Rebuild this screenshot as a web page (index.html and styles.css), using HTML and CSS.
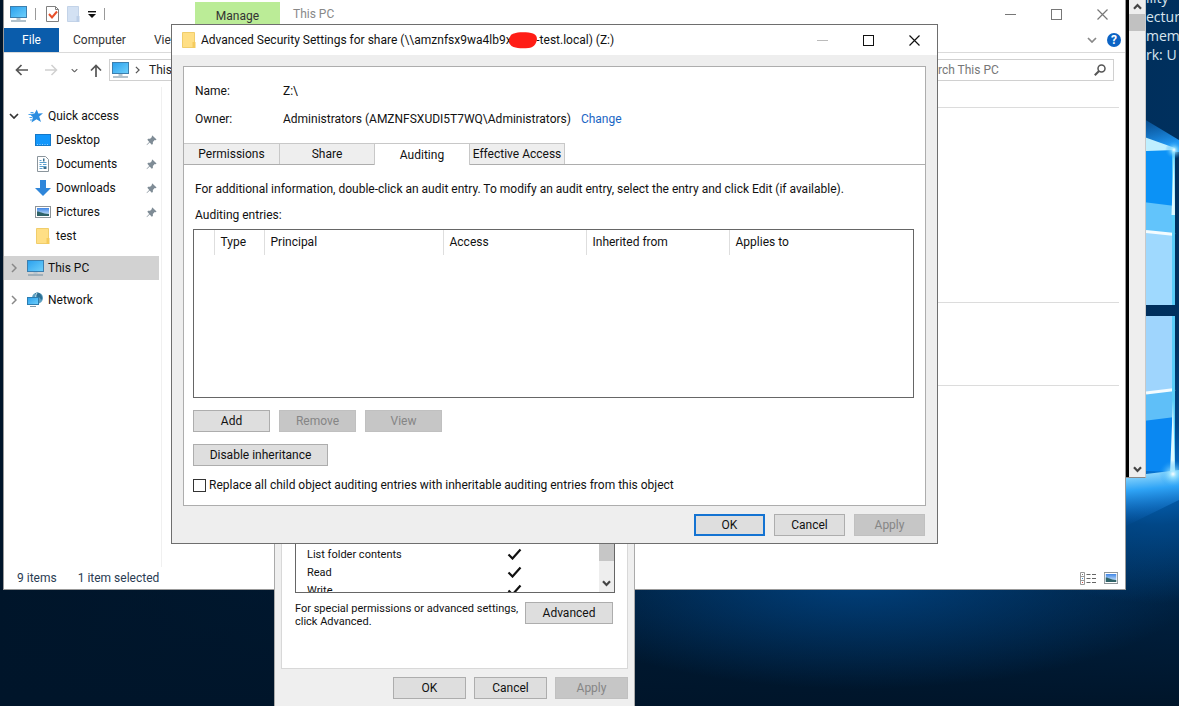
FILE: index.html
```html
<!DOCTYPE html>
<html lang="en">
<head>
    <meta charset="UTF-8">
    <meta name="viewport" content="width=device-width, initial-scale=1.0">
    <title>Advanced Security Settings</title>
    <link rel="stylesheet" href="styles.css">
</head>
<body>

<svg class="sprite" width="0" height="0" aria-hidden="true">
    <defs>
        <linearGradient id="screenFill" x1="0" y1="0" x2="1" y2="1">
            <stop offset="0" stop-color="#2aa0ee"/>
            <stop offset="1" stop-color="#6fd0fb"/>
        </linearGradient>
        <linearGradient id="skyFill" x1="0" y1="0" x2="0" y2="1">
            <stop offset="0" stop-color="#3f86e6"/>
            <stop offset="1" stop-color="#e4f3fb"/>
        </linearGradient>
    </defs>
    <symbol id="icon-pc" viewBox="0 0 17 16">
        <rect x="0.5" y="0.5" width="16" height="11" fill="url(#screenFill)" stroke="#3d7fae"/>
        <path d="M6.5 12h4v2h-4z" fill="#b9c6cf"/>
        <path d="M1 15h15" stroke="#7f98a8" stroke-width="1.2"/>
    </symbol>
    <symbol id="icon-folder" viewBox="0 0 14 16">
        <path d="M0.5 0.5h12v15h-12z" fill="#ffdf85" stroke="#f0cd6b"/>
        <path d="M10.5 10h3v6h-3z" fill="#f5cb5c"/>
    </symbol>
    <symbol id="icon-picture" viewBox="0 0 16 12">
        <rect x="0.5" y="0.5" width="15" height="11" fill="#fff" stroke="#8d9499"/>
        <rect x="2" y="2" width="12" height="8" fill="url(#skyFill)"/>
        <path d="M2 5.5c3 0 5 2 12 2.500V10H2z" fill="#2f6368"/>
    </symbol>
    <symbol id="icon-pin" viewBox="0 0 12 12">
        <path d="M7 0.500l4.500 4.500-1 0.700-1-0.200-2 2 0 2.200-1.200 0.800L4 8.300 0.800 11.300l0-0.900L3.500 7.500 1.500 5.300l0.800-1.200 2.200 0 2-2-0.200-1z" fill="#7f8c96"/>
    </symbol>
    <symbol id="icon-check" viewBox="0 0 15 12">
        <path d="M1.500 6.500L5.500 10.500 13.500 1.500" fill="none" stroke="#111" stroke-width="2.200"/>
    </symbol>
    <symbol id="icon-right" viewBox="0 0 6 10">
        <path d="M1 1l4 4-4 4" fill="none" stroke="currentColor" stroke-width="1.500"/>
    </symbol>
    <symbol id="icon-down" viewBox="0 0 10 6">
        <path d="M1 1l4 4 4-4" fill="none" stroke="currentColor" stroke-width="1.700"/>
    </symbol>
    <symbol id="icon-scroll" viewBox="0 0 9 7">
        <path d="M1 1.200l3.500 3.800 3.500-3.800" fill="none" stroke="currentColor" stroke-width="2.200"/>
    </symbol>
    <symbol id="icon-close" viewBox="0 0 11 11">
        <path d="M0.500 0.500l10 10M10.500 0.500l-10 10" fill="none" stroke="currentColor" stroke-width="1.200"/>
    </symbol>
    <symbol id="icon-max" viewBox="0 0 11 11">
        <rect x="0.500" y="0.500" width="10" height="10" fill="none" stroke="currentColor"/>
    </symbol>
    <symbol id="icon-min" viewBox="0 0 11 11">
        <path d="M0 5.500h11" stroke="currentColor"/>
    </symbol>
</svg>

<div class="desktop">
    <svg class="wallpaper-logo" width="80" height="560" viewBox="0 0 80 560" aria-hidden="true">
        <defs>
            <radialGradient id="flare">
                <stop offset="0" stop-color="#fff"/>
                <stop offset="0.250" stop-color="#9fe6ff" stop-opacity="0.800"/>
                <stop offset="1" stop-color="#1c9cf5" stop-opacity="0"/>
            </radialGradient>
            <linearGradient id="beam" x1="0.300" y1="0" x2="0.400" y2="1">
                <stop offset="0" stop-color="#a9e6ff"/>
                <stop offset="0.350" stop-color="#2fa4f6"/>
                <stop offset="1" stop-color="#0a5cb5" stop-opacity="0"/>
            </linearGradient>
            <linearGradient id="haze" x1="0" y1="0" x2="0.300" y2="1">
                <stop offset="0" stop-color="#0a5cb5" stop-opacity="0"/>
                <stop offset="1" stop-color="#1f96f2"/>
            </linearGradient>
        </defs>
        <path d="M20 104L80 140V152H20z" fill="url(#haze)"/>
        <path d="M20 128L76 148V152H20z" fill="#bfefff"/>
        <path d="M20 152L76 150V305H20z" fill="#0b92f6"/>
        <path d="M20 199L76 206V305H20z" fill="#62c4fb"/>
        <path d="M20 228L76 234V305H20z" fill="#9fd9fe"/>
        <path d="M47 231.500L76 234.500" stroke="#f4fcff" stroke-width="3"/>
        <path d="M20 316H76V472L20 470z" fill="#0a88f2"/>
        <path d="M20 316H76V417L20 424z" fill="#5fbff8"/>
        <path d="M20 316H76V390L20 396z" fill="#9fd5fd"/>
        <path d="M47 393L76 389.500" stroke="#f4fcff" stroke-width="3"/>
        <path d="M74.500 150V305M74.500 316V474" stroke="#58cdf8" stroke-width="3"/>
        <path d="M75 150L72.500 215H76zM71 474L74 400L76 474z" fill="#dffaff"/>
        <path d="M20 478L47 474 80 470V500L27 526z" fill="url(#beam)"/>
        <circle cx="74" cy="474" r="14" fill="url(#flare)"/>
        <circle cx="75" cy="150" r="9" fill="url(#flare)"/>
    </svg>
    <ul class="host-info">
        <li>ility</li>
        <li>ecture</li>
        <li>memo</li>
        <li>rk: U</li>
    </ul>

    <!-- console window behind explorer -->
    <div class="console">
        <div class="scrollbar">
            <svg class="scroll-up" width="9" height="7"><use href="#icon-scroll"/></svg>
            <div class="scroll-thumb"></div>
            <svg class="scroll-down" width="9" height="7"><use href="#icon-scroll"/></svg>
        </div>
    </div>

    <div class="explorer">
        <div class="explorer-title">
            <div class="quick-bar">
                <svg width="17" height="16"><use href="#icon-pc"/></svg>
                <span class="divider"></span>
                <svg class="quick-check" width="13" height="16" viewBox="0 0 13 16">
                    <path d="M0.500 0.500h9l3 3v12h-12z" fill="#fff" stroke="#808080"/>
                    <path d="M9.500 0.500v3h3" fill="none" stroke="#808080"/>
                    <path d="M3 8l3 3.500 5-6" fill="none" stroke="#e8502a" stroke-width="2"/>
                </svg>
                <svg width="13" height="16" viewBox="0 0 13 16">
                    <path d="M0.500 0.500h11v15h-11z" fill="#d3e1f3" stroke="#c3d3e8"/>
                    <path d="M9.500 10h3v6h-3z" fill="#bccfe8"/>
                </svg>
                <svg width="8" height="7" viewBox="0 0 8 7">
                    <path d="M0 0.700h8" stroke="#111" stroke-width="1.400"/>
                    <path d="M0 3h8L4 7z" fill="#111"/>
                </svg>
                <span class="divider"></span>
            </div>
            <div class="manage-tab">Manage</div>
            <span class="explorer-name">This PC</span>
            <div class="window-buttons">
                <button type="button" aria-label="Minimize"><svg width="11" height="11"><use href="#icon-min"/></svg></button>
                <button type="button" aria-label="Maximize"><svg width="11" height="11"><use href="#icon-max"/></svg></button>
                <button type="button" aria-label="Close"><svg width="11" height="11"><use href="#icon-close"/></svg></button>
            </div>
        </div>

        <div class="ribbon">
            <button type="button" class="ribbon-file">File</button>
            <button type="button" class="ribbon-tab">Computer</button>
            <button type="button" class="ribbon-tab">View</button>
            <div class="ribbon-help">
                <svg width="10" height="6"><use href="#icon-down"/></svg>
                <button type="button" class="help-btn">?</button>
            </div>
        </div>

        <div class="address-row">
            <svg class="arrow" width="13" height="12" viewBox="0 0 13 12"><path d="M13 6H1.500M6.500 1L1.500 6l5 5" fill="none" stroke="#555" stroke-width="1.700"/></svg>
            <svg class="arrow" width="13" height="12" viewBox="0 0 13 12"><path d="M0 6h11.500M6.500 1l5 5-5 5" fill="none" stroke="#d0d0d0" stroke-width="1.500"/></svg>
            <svg class="recent" width="7" height="5" viewBox="0 0 10 6"><use href="#icon-down"/></svg>
            <svg class="arrow" width="12" height="13" viewBox="0 0 12 13"><path d="M6 13V1.500M1 6.500l5-5 5 5" fill="none" stroke="#555" stroke-width="1.700"/></svg>
            <div class="address">
                <svg width="17" height="16"><use href="#icon-pc"/></svg>
                <svg class="crumb" width="5" height="8" viewBox="0 0 6 10"><use href="#icon-right"/></svg>
                <span>This PC</span>
            </div>
            <div class="search">
                <input type="text" placeholder="Search This PC" aria-label="Search This PC">
                <svg width="12" height="12" viewBox="0 0 12 12">
                    <circle cx="7.500" cy="4.500" r="3.500" fill="none" stroke="#555" stroke-width="1.500"/>
                    <path d="M5 7L0.800 11.200" stroke="#555" stroke-width="2"/>
                </svg>
            </div>
        </div>

        <div class="explorer-body">
            <nav class="nav-pane">
                <a href="#" class="nav-item nav-root">
                    <svg class="chevron open" width="10" height="6"><use href="#icon-down"/></svg>
                    <svg class="nav-icon" width="17" height="14" viewBox="0 0 17 14">
                        <path d="M9.800 0.500l1.500 4 4.700-0.200-3.800 3.200 1.800 5.500-4.500-2.800-5 3.300 1.500-5.300L2.500 5l5-0.400z" fill="#2b8de0"/>
                        <path d="M3.500 3.500h3M1.500 5.500h4M2.500 8.500h3M3 11h3" stroke="#4aa3ea"/>
                    </svg>
                    <span>Quick access</span>
                </a>
                <a href="#" class="nav-item nav-child">
                    <svg class="nav-icon" width="16" height="12" viewBox="0 0 16 12"><rect x="0.500" y="0.500" width="15" height="11" fill="#1397fb" stroke="#1478c8"/><path d="M2 10.500h12" stroke="#8fcdff" stroke-dasharray="1 1.500"/></svg>
                    <span>Desktop</span>
                    <svg class="pin" width="11" height="11"><use href="#icon-pin"/></svg>
                </a>
                <a href="#" class="nav-item nav-child">
                    <svg class="nav-icon" width="16" height="16" viewBox="0 0 16 16">
                        <path d="M2.500 0.500h8l3 3v12h-11z" fill="#fff" stroke="#8b959c"/>
                        <path d="M4.500 4.500h2M4.500 6.500h7M4.500 8.500h2M8 8.500h3.500M4.500 10.500h7M4.500 12.500h3" stroke="#5ba0cf"/>
                        <path d="M8 2.500h1.500v3H8zM8.500 11h3v2h-3z" fill="#3c6e8c"/>
                    </svg>
                    <span>Documents</span>
                    <svg class="pin" width="11" height="11"><use href="#icon-pin"/></svg>
                </a>
                <a href="#" class="nav-item nav-child">
                    <svg class="nav-icon" width="16" height="16" viewBox="0 0 16 16"><path d="M5 0h6v8h5l-8 8-8-8h5z" fill="#2f86da"/></svg>
                    <span>Downloads</span>
                    <svg class="pin" width="11" height="11"><use href="#icon-pin"/></svg>
                </a>
                <a href="#" class="nav-item nav-child">
                    <svg class="nav-icon" width="16" height="12"><use href="#icon-picture"/></svg>
                    <span>Pictures</span>
                    <svg class="pin" width="11" height="11"><use href="#icon-pin"/></svg>
                </a>
                <a href="#" class="nav-item nav-child">
                    <svg class="nav-icon" width="16" height="16" viewBox="0 0 14 16"><use href="#icon-folder"/></svg>
                    <span>test</span>
                </a>
                <a href="#" class="nav-item nav-root nav-group selected">
                    <svg class="chevron" width="10" height="10" viewBox="0 0 6 10"><use href="#icon-right"/></svg>
                    <svg class="nav-icon" width="17" height="16"><use href="#icon-pc"/></svg>
                    <span>This PC</span>
                </a>
                <a href="#" class="nav-item nav-root nav-group">
                    <svg class="chevron" width="10" height="10" viewBox="0 0 6 10"><use href="#icon-right"/></svg>
                    <svg class="nav-icon" width="17" height="16" viewBox="0 0 17 16">
                        <circle cx="10.500" cy="6" r="5.500" fill="#5c9fc0"/>
                        <path d="M8 1.500c2 1 0 3 3 3.500s2 3 4 2.500C16 4 13 0.500 10 0.500z" fill="#2d6f93"/>
                        <path d="M10 1c-2 3-2 7 0 10" fill="none" stroke="#cfe9f3"/>
                        <rect x="0.500" y="5.500" width="11" height="7" fill="url(#screenFill)" stroke="#2d7db0"/>
                        <path d="M3 14.500h6" stroke="#7f98a8"/>
                    </svg>
                    <span>Network</span>
                </a>
            </nav>
            <div class="file-groups">
                <section class="file-group"></section>
                <section class="file-group"></section>
                <section class="file-group"></section>
            </div>
        </div>

        <div class="status-bar">
            <span>9 items</span>
            <span>1 item selected</span>
            <div class="view-modes">
                <svg width="17" height="13" viewBox="0 0 17 13">
                    <path d="M0.500 0.500h4v12h-4zM0.500 4.500h4M0.500 8.500h4" fill="#fff" stroke="#999"/>
                    <path d="M6.500 2.500h4M12 2.500h4M6.500 6.500h4M12 6.500h4M6.500 10.500h4M12 10.500h4" stroke="#666"/>
                    <path d="M2 2h1v1H2z" fill="#777"/><path d="M2 6h1v1H2z" fill="#3b8fd0"/><path d="M2 10h1v1H2z" fill="#d0443b"/>
                </svg>
                <svg width="14" height="12" viewBox="0 0 16 12" preserveAspectRatio="none"><use href="#icon-picture"/></svg>
            </div>
        </div>
    </div>

    <div class="properties">
        <div class="properties-page">
            <div class="permission-list">
                <table class="permission-table">
                    <tr><td>List folder contents</td><td class="allow"><svg width="15" height="12"><use href="#icon-check"/></svg></td></tr>
                    <tr><td>Read</td><td class="allow"><svg width="15" height="12"><use href="#icon-check"/></svg></td></tr>
                    <tr><td>Write</td><td class="allow"><svg width="15" height="12"><use href="#icon-check"/></svg></td></tr>
                </table>
                <div class="permission-scroll">
                    <div class="permission-thumb"></div>
                    <svg width="9" height="7"><use href="#icon-scroll"/></svg>
                </div>
            </div>
            <div class="special">
                <p>For special permissions or advanced settings, click Advanced.</p>
                <button type="button" class="btn">Advanced</button>
            </div>
        </div>
        <div class="properties-footer">
            <button type="button" class="btn">OK</button>
            <button type="button" class="btn">Cancel</button>
            <button type="button" class="btn" disabled>Apply</button>
        </div>
    </div>

    <div class="dialog">
        <div class="dialog-title">
            <svg width="14" height="16"><use href="#icon-folder"/></svg>
            <h1>Advanced Security Settings for share (\\amznfsx9wa4lb9x<span class="redacted">y<svg width="28" height="17" viewBox="0 0 28 17"><path d="M5 1.500C9-0.500 20 0 24 1.500s4.500 5 3.500 8-3 6-8 6.500-11 0.500-15-1S-0.500 10 0.500 6.500 2 2.500 5 1.500z" fill="#ff1d16"/></svg></span>-test.local) (Z:)</h1>
            <div class="window-buttons">
                <button type="button" aria-label="Minimize" disabled><svg width="11" height="11"><use href="#icon-min"/></svg></button>
                <button type="button" aria-label="Maximize"><svg width="11" height="11"><use href="#icon-max"/></svg></button>
                <button type="button" aria-label="Close"><svg width="11" height="11"><use href="#icon-close"/></svg></button>
            </div>
        </div>

        <div class="dialog-body">
            <div class="panel">
                <dl class="details">
                    <dt>Name:</dt>
                    <dd>Z:\</dd>
                    <dt>Owner:</dt>
                    <dd>Administrators (AMZNFSXUDI5T7WQ\Administrators) <a href="#">Change</a></dd>
                </dl>

                <div class="tabs" role="tablist">
                    <button type="button" class="tab" role="tab">Permissions</button>
                    <button type="button" class="tab" role="tab">Share</button>
                    <button type="button" class="tab active" role="tab" aria-selected="true">Auditing</button>
                    <button type="button" class="tab" role="tab">Effective Access</button>
                </div>

                <div class="tab-page">
                    <p>For additional information, double-click an audit entry. To modify an audit entry, select the entry and click Edit (if available).</p>
                    <p>Auditing entries:</p>
                    <div class="entries">
                        <table class="entries-table">
                            <thead>
                                <tr>
                                    <th class="col-icon"></th>
                                    <th class="col-type">Type</th>
                                    <th class="col-principal">Principal</th>
                                    <th class="col-access">Access</th>
                                    <th class="col-access">Inherited from</th>
                                    <th>Applies to</th>
                                </tr>
                            </thead>
                        </table>
                    </div>
                    <div class="actions">
                        <button type="button" class="btn">Add</button>
                        <button type="button" class="btn" disabled>Remove</button>
                        <button type="button" class="btn" disabled>View</button>
                    </div>
                    <button type="button" class="btn btn-wide">Disable inheritance</button>
                    <div class="replace">
                        <input type="checkbox" id="replaceChild">
                        <label for="replaceChild">Replace all child object auditing entries with inheritable auditing entries from this object</label>
                    </div>
                </div>
            </div>
            <div class="dialog-footer">
                <button type="button" class="btn btn-default">OK</button>
                <button type="button" class="btn">Cancel</button>
                <button type="button" class="btn" disabled>Apply</button>
            </div>
        </div>
    </div>
</div>

</body>
</html>
```
FILE: styles.css
```css
* {
    box-sizing: border-box;
}
body {
    margin: 0;
    font-family: Roboto, "Open Sans", sans-serif;
    font-size: 12px;
    line-height: 16px;
    color: #111;
}
button, input {
    font: inherit;
    color: inherit;
    margin: 0;
}
svg {
    display: block;
    flex: none;
}
p, h1, dl, dd, ul {
    margin: 0;
}
a {
    color: inherit;
    text-decoration: none;
}
.sprite {
    position: absolute;
}
.desktop {
    position: relative;
    min-height: 100vh;
    overflow: hidden;
    background:
        radial-gradient(ellipse 200px 130px at 98% 67%, #0672d0 0%, #014787 40%, rgba(0, 50, 100, 0) 100%),
        radial-gradient(ellipse 340px 110px at 73% 82%, #01407c 0%, rgba(0, 48, 95, 0) 100%),
        linear-gradient(to top, #00152a 0%, rgba(0, 21, 42, 0) 35%),
        linear-gradient(to right, #00152a 0%, #001d38 40%, #00305e 100%);
}

/* wallpaper */
.wallpaper-logo {
    position: absolute;
    top: 0;
    right: 0;
}
.host-info {
    position: absolute;
    top: -12px;
    right: 0;
    width: 33px;
    padding: 0;
    list-style: none;
    white-space: nowrap;
    font-family: "Open Sans", sans-serif;
    font-size: 14px;
    line-height: 19px;
    color: #d8e4ee;
}

/* console */
.console {
    position: absolute;
    top: 0;
    right: 33px;
    height: 478px;
    padding-left: 4px;
    background: #000;
    border-right: 1px solid #c8c8c8;
    border-bottom: 1px solid #888;
}
.scrollbar {
    display: flex;
    flex-direction: column;
    align-items: center;
    width: 16px;
    height: 100%;
    padding: 3px 0 4px;
    background: #eee;
    color: #444;
}
.scroll-up {
    transform: rotate(180deg);
}
.scroll-thumb {
    width: 100%;
    height: 17px;
    margin-top: 4px;
    background: #c1c1c1;
}
.scroll-down {
    margin-top: auto;
}

/* explorer */
.explorer {
    position: absolute;
    top: 0;
    left: 3px;
    right: 53px;
    background: #fff;
    border: 1px solid #999;
    border-top: none;
}
.explorer-title {
    display: flex;
    align-items: center;
    height: 28px;
}
.quick-bar {
    display: flex;
    align-items: center;
    gap: 8px;
    width: 191px;
    padding-left: 6px;
}
.quick-bar .divider {
    width: 1px;
    height: 12px;
    background: #999;
}
.quick-check {
    margin-left: 2px;
}
.manage-tab {
    align-self: flex-end;
    width: 85px;
    height: 26px;
    padding-top: 6px;
    text-align: center;
    color: #333;
    background: #bbec97;
}
.explorer-name {
    padding-left: 13px;
    color: #888;
}
.window-buttons {
    display: flex;
    margin-left: auto;
}
.window-buttons button {
    display: flex;
    align-items: center;
    justify-content: center;
    width: 46px;
    height: 28px;
    padding: 0;
    border: none;
    background: none;
}
.window-buttons button:disabled {
    color: #bbb;
}
.explorer .window-buttons {
    color: #777;
}
.ribbon {
    display: flex;
    height: 25px;
    border-bottom: 1px solid #dadada;
}
.ribbon button {
    border: none;
    padding: 0;
}
.ribbon-file {
    width: 55px;
    color: #fff;
    background: #0a5cab;
}
.ribbon-tab {
    margin-left: 14px;
    background: none;
    color: #333;
}
.ribbon-tab + .ribbon-tab {
    margin-left: 28px;
}
.ribbon-help {
    display: flex;
    align-items: center;
    gap: 10px;
    margin-left: auto;
    padding-right: 4px;
    color: #888;
}
.ribbon .help-btn {
    width: 14px;
    height: 14px;
    border-radius: 50%;
    line-height: 14px;
    font-weight: bold;
    color: #fff;
    background: #0c63c4;
}
.address-row {
    display: flex;
    align-items: center;
    height: 34px;
    padding: 0 11px;
    color: #666;
}
.address-row .arrow {
    margin-right: 17px;
}
.recent {
    margin: 0 12px 0 -4px;
}
.address {
    display: flex;
    flex: 1;
    align-items: center;
    height: 22px;
    margin-left: -10px;
    padding-left: 2px;
    border: 1px solid #d0d0d0;
    color: #222;
}
.crumb {
    margin: 0 9px 0 6px;
    color: #555;
}
.search {
    display: flex;
    align-items: center;
    width: 204px;
    height: 22px;
    margin-left: 12px;
    padding: 0 7px;
    border: 1px solid #d0d0d0;
}
.search input {
    flex: 1;
    min-width: 0;
    padding: 0;
    border: none;
    background: none;
}
.search input::placeholder {
    color: #777;
    opacity: 1;
}
.explorer-body {
    display: flex;
    height: 480px;
}
.nav-pane {
    width: 158px;
    padding: 17px 2px 0 0;
    border-right: 1px solid #f0f0f0;
}
.nav-item {
    display: flex;
    align-items: center;
    height: 24px;
    padding-right: 2px;
}
.nav-root {
    padding-left: 5px;
}
.nav-child {
    padding-left: 31px;
}
.nav-group {
    margin-top: 8px;
}
.nav-icon {
    margin-right: 5px;
}
.nav-root .nav-icon {
    margin-right: 4px;
}
.selected {
    background: #d2d2d2;
}
.chevron {
    margin-right: 8px;
    color: #888;
}
.chevron.open {
    color: #333;
}
.pin {
    margin-left: auto;
}
.file-groups {
    flex: 1;
    padding: 20px 6px 0 12px;
}
.file-group {
    height: 83px;
    border-top: 1px solid #dcdcdc;
}
.file-group:first-child {
    height: 195px;
}
.status-bar {
    display: flex;
    align-items: center;
    gap: 21px;
    height: 22px;
    padding: 0 7px 0 13px;
    color: #2a3c52;
}
.view-modes {
    display: flex;
    align-items: center;
    gap: 7px;
    margin-left: auto;
}

/* shared buttons */
.btn {
    height: 22px;
    padding: 0;
    border: 1px solid #adadad;
    background: #dedede;
    font-size: 12px;
    line-height: 18px;
}
.btn:disabled {
    color: #858585;
    background: #c6c6c6;
    border-color: #c0c0c0;
}
.btn-default {
    border: 2px solid #1473d2;
    line-height: 16px;
}

/* properties window */
.properties {
    position: absolute;
    top: 543px;
    left: 274px;
    width: 361px;
    padding: 0 6px 7px;
    font-size: 11px;
    line-height: 13px;
    background: #efefef;
    border: 1px solid #aaa;
    border-top: none;
}
.properties-page {
    height: 126px;
    padding: 0 12px 0 13px;
    background: #fff;
    border: 1px solid #d8d8d8;
    border-top: none;
}
.permission-list {
    display: flex;
    height: 50px;
    overflow: hidden;
    border: 1px solid #666;
    border-top: none;
}
.permission-table {
    flex: 1;
    border-collapse: collapse;
}
.permission-table td {
    height: 18px;
    padding: 4px 0 0 11px;
}
.permission-table .allow {
    width: 92px;
    padding-left: 0;
}
.permission-scroll {
    display: flex;
    flex-direction: column;
    align-items: center;
    justify-content: space-between;
    width: 15px;
    padding-bottom: 5px;
    background: #eee;
    color: #444;
}
.permission-thumb {
    width: 100%;
    height: 18px;
    background: #c6c6c6;
}
.special {
    display: flex;
    justify-content: space-between;
    padding: 9px 2px 0 0;
}
.special .btn {
    width: 88px;
}
.special p {
    width: 226px;
}
.properties-footer {
    display: flex;
    justify-content: flex-end;
    gap: 8px;
    padding-top: 8px;
}
.properties-footer .btn {
    width: 73px;
}

/* advanced security dialog */
.dialog {
    position: absolute;
    top: 24px;
    left: 171px;
    width: 767px;
    background: #fff;
    border: 1px solid #6e6e6e;
}
.dialog-title {
    display: flex;
    align-items: center;
    height: 30px;
    padding-left: 10px;
}
.dialog-title h1 {
    padding-left: 5px;
    font-size: 12px;
    font-weight: normal;
    white-space: nowrap;
}
.redacted {
    position: relative;
    padding: 0 6px 0 13px;
}
.redacted svg {
    position: absolute;
    top: -1px;
    left: -3px;
}
.dialog-body {
    padding: 11px 11px 7px;
    background: #eee;
}
.panel {
    background: #fff;
    border: 1px solid #adadad;
}
.details {
    display: grid;
    grid-template-columns: 88px 1fr;
    row-gap: 12px;
    padding: 16px 11px;
}
.details a {
    margin-left: 7px;
    color: #1a66c4;
}
.tabs {
    display: flex;
    height: 22px;
    border-bottom: 1px solid #adadad;
}
.tab {
    width: 96px;
    margin-right: -1px;
    padding: 0;
    border: 1px solid #c8c8c8;
    border-bottom: none;
    background: #eee;
}
.tab:first-child {
    border-left: none;
}
.tab.active {
    margin-bottom: -1px;
    background: #fff;
}
.tab-page {
    padding: 16px 11px 12px 9px;
}
.tab-page p {
    padding: 0 2px;
    margin-bottom: 10px;
    white-space: nowrap;
}
.entries {
    height: 169px;
    margin-top: -4px;
    border: 1px solid #666;
}
.entries-table {
    width: 100%;
    table-layout: fixed;
    border-collapse: collapse;
}
.entries-table th {
    height: 25px;
    padding: 0 6px 2px;
    text-align: left;
    font-weight: normal;
    border-right: 1px solid #dedede;
}
.entries-table th:last-child {
    border-right: none;
}
.col-icon {
    width: 20px;
}
.col-type {
    width: 50px;
}
.col-principal {
    width: 179px;
}
.col-access {
    width: 143px;
}
.actions {
    display: flex;
    gap: 9px;
    margin: 12px 0;
}
.actions .btn {
    width: 77px;
}
.btn-wide {
    display: block;
    width: 135px;
}
.replace {
    display: flex;
    align-items: center;
    gap: 3px;
    margin-top: 11px;
}
.replace input {
    appearance: none;
    width: 13px;
    height: 13px;
    border: 1px solid #333;
    background: #fff;
}
.dialog-footer {
    display: flex;
    justify-content: flex-end;
    gap: 9px;
    padding: 8px 1px 0 0;
}
.dialog-footer .btn {
    width: 71px;
}
```
